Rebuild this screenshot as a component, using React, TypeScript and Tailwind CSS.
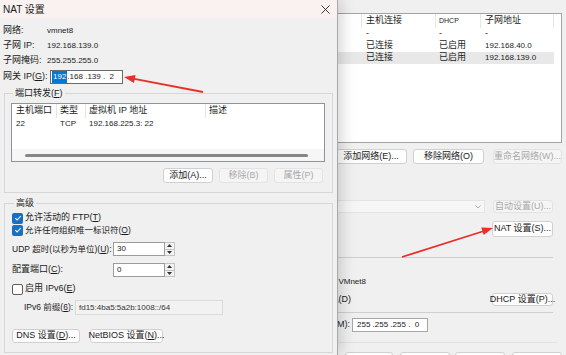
import React from "react";

type BtnProps = {
  children?: React.ReactNode;
  className: string;
  disabled?: boolean;
};

function Btn({ children, className, disabled }: BtnProps) {
  return (
    <div
      className={`flex flex-none items-center justify-center whitespace-nowrap rounded-[3px] border text-[9px] ${
        disabled
          ? "border-[#e3e3e3] bg-[#f5f5f5] text-[#a9a9a9]"
          : "border-[#d0d0d0] bg-[#fdfdfd] text-[#1b1b1b]"
      } ${className}`}
    >
      {children}
    </div>
  );
}

function Check({ checked }: { checked: boolean }) {
  if (!checked) {
    return <div className="h-[11px] w-[11px] flex-none rounded-[2px] border border-[#5d5d5d] bg-white" />;
  }
  return (
    <div className="flex h-[11px] w-[11px] flex-none items-center justify-center rounded-[2px] bg-[#1a6fc4]">
      <svg width="8" height="8" viewBox="0 0 8 8" fill="none">
        <path d="M1.3 4.2 3.1 6 6.8 2" stroke="white" strokeWidth="1.1" />
      </svg>
    </div>
  );
}

function Spin({ value }: { value: string }) {
  return (
    <div className="flex h-[14px] flex-none">
      <div className="flex w-[52px] items-center border border-[#9c9c9c] bg-white pl-[3px] text-[8px]">{value}</div>
      <div className="flex w-[10px] flex-col border border-l-0 border-[#c4c4c4]">
        <div className="flex flex-1 items-center justify-center bg-[#f3f3f3]">
          <svg width="5" height="3" viewBox="0 0 5 3"><path d="M0 3h5L2.5 0z" fill="#333" /></svg>
        </div>
        <div className="flex flex-1 items-center justify-center border-t border-[#c4c4c4] bg-[#f3f3f3]">
          <svg width="5" height="3" viewBox="0 0 5 3"><path d="M0 0h5L2.5 3z" fill="#333" /></svg>
        </div>
      </div>
    </div>
  );
}

function NatDialog() {
  return (
    <div className="relative z-10 flex h-[355px] w-[338px] flex-none flex-col border-r border-[#a9a9a9] bg-[#f0f0f0] shadow-[3px_0_14px_rgba(0,0,0,0.18)]">
      <div className="flex h-[18px] items-center justify-between bg-[#f9f2f1] pl-[3px] pr-[7px]">
        <span className="text-[10px]">NAT 设置</span>
        <svg width="9" height="9" viewBox="0 0 9 9">
          <path d="M0.5 0.5l8 8M8.5 0.5l-8 8" stroke="#222" strokeWidth="0.9" />
        </svg>
      </div>

      <div className="pl-[3px] pt-[5px] text-[9px]">
        <div className="flex h-[15px] items-center">
          <span className="w-[44px]">网络:</span>
          <span className="text-[8px]">vmnet8</span>
        </div>
        <div className="flex h-[15px] items-center">
          <span className="w-[44px]">子网 IP:</span>
          <span className="text-[8px]">192.168.139.0</span>
        </div>
        <div className="flex h-[15px] items-center">
          <span className="w-[44px]">子网掩码:</span>
          <span className="text-[8px]">255.255.255.0</span>
        </div>
        <div className="mt-[2px] flex h-[14px] items-center">
          <span className="w-[47px] whitespace-nowrap">
            网关 IP(<span className="underline">G</span>):
          </span>
          <div className="flex h-[14px] w-[73px] items-center border border-[#6b6b6b] bg-white pl-[1px] text-[8px]">
            <span className="bg-[#0078d7] px-[1px] text-white">192</span>
            <span className="whitespace-pre">.168 .139 .  2</span>
          </div>
        </div>
      </div>

      <div className="flex flex-col px-[4px] text-[9px]">
        <fieldset className="mt-[3px] flex h-[106px] flex-col border border-[#d6d6d6] pl-[6px] pr-[7px]">
          <legend className="ml-[2px] px-[2px] leading-[12px]">
            端口转发(<span className="underline">F</span>)
          </legend>
          <div className="mt-[4px] flex h-[59px] flex-col border border-[#8f949c] bg-white">
            <div className="flex h-[14px]">
              <div className="flex w-[45px] items-center border-r border-[#e6e6e6] pl-[4px]">主机端口</div>
              <div className="flex w-[29px] items-center border-r border-[#e6e6e6] pl-[3px]">类型</div>
              <div className="flex w-[120px] items-center border-r border-[#e6e6e6] pl-[3px]">虚拟机 IP 地址</div>
              <div className="flex flex-1 items-center pl-[3px]">描述</div>
            </div>
            <div className="flex h-[12px] items-center text-[8px]">
              <div className="w-[45px] pl-[4px]">22</div>
              <div className="w-[29px] pl-[3px]">TCP</div>
              <div className="pl-[3px]">192.168.225.3: 22</div>
            </div>
            <div className="flex-1" />
            <div className="flex h-[12px] items-center bg-[#f6f6f6]">
              <div className="ml-[13px] h-[3px] w-[283px] rounded-full bg-[#868686]" />
            </div>
          </div>
          <div className="mt-[6px] flex justify-end gap-[6px] pr-[2px]">
            <Btn className="h-[15px] w-[50px]">添加(A)...</Btn>
            <Btn className="h-[15px] w-[49px]" disabled>移除(B)</Btn>
            <Btn className="h-[15px] w-[49px]" disabled>属性(P)</Btn>
          </div>
        </fieldset>

        <fieldset className="mt-[4px] flex h-[156px] flex-col border border-[#d6d6d6] pl-[7px]">
          <legend className="ml-[2px] px-[2px] leading-[12px]">高级</legend>
          <div className="mt-[3px] flex h-[12px] items-center gap-[2px]">
            <Check checked />
            <span>
              允许活动的 FTP(<span className="underline">T</span>)
            </span>
          </div>
          <div className="flex h-[12px] items-center gap-[2px]">
            <Check checked />
            <span className="text-[8.5px]">
              允许任何组织唯一标识符(<span className="underline">O</span>)
            </span>
          </div>
          <div className="mt-[6px] flex h-[14px] items-center">
            <span className="w-[101px] flex-none whitespace-nowrap text-[8.5px]">
              UDP 超时(以秒为单位)(<span className="underline">U</span>):
            </span>
            <Spin value="30" />
          </div>
          <div className="mt-[7px] flex h-[14px] items-center">
            <span className="w-[101px] flex-none whitespace-nowrap">
              配置端口(<span className="underline">C</span>):
            </span>
            <Spin value="0" />
          </div>
          <div className="mt-[6px] flex h-[12px] items-center gap-[2px]">
            <Check checked={false} />
            <span>
              启用 IPv6(<span className="underline">E</span>)
            </span>
          </div>
          <div className="mt-[5px] flex h-[15px] items-center pl-[12px]">
            <span className="w-[51px] flex-none whitespace-nowrap text-[8.5px]">
              IPv6 前缀(<span className="underline">6</span>):
            </span>
            <div className="flex h-[15px] w-[148px] items-center border border-[#dadada] bg-[#f2f2f2] pl-[3px] text-[8px] text-[#333]">
              fd15:4ba5:5a2b:1008::/64
            </div>
          </div>
          <div className="mt-[14px] flex gap-[10px]">
            <Btn className="h-[14px] w-[68px]">
              DNS 设置(<span className="underline">D</span>)...
            </Btn>
            <Btn className="h-[14px] w-[73px]">
              NetBIOS 设置(<span className="underline">N</span>)...
            </Btn>
          </div>
        </fieldset>
      </div>
    </div>
  );
}

function MainWindow() {
  return (
    <div className="relative flex-1 overflow-hidden bg-[#f0f0f0] text-[9px]">
      <div className="-ml-[40px] flex w-[268px] flex-col pt-[13px]">
        <div className="flex h-[130px] w-[264px] flex-col border border-[#a3a3a3] bg-white">
          <div className="flex h-[14px]">
            <div className="w-[63px] border-r border-[#e6e6e6]" />
            <div className="flex w-[74px] items-center border-r border-[#e6e6e6] pl-[4px]">主机连接</div>
            <div className="flex w-[45px] items-center border-r border-[#e6e6e6] pl-[3px] text-[7px]">DHCP</div>
            <div className="flex w-[73px] items-center border-r border-[#e6e6e6] pl-[4px]">子网地址</div>
          </div>
          <div className="flex h-[12px] items-center">
            <div className="w-[63px]" />
            <div className="w-[74px] pl-[4px]">-</div>
            <div className="w-[45px] pl-[3px]">-</div>
            <div className="w-[73px] pl-[4px]">-</div>
          </div>
          <div className="flex h-[12px] items-center">
            <div className="w-[63px]" />
            <div className="w-[74px] pl-[4px]">已连接</div>
            <div className="w-[45px] pl-[3px]">已启用</div>
            <div className="w-[73px] pl-[4px] text-[8px]">192.168.40.0</div>
          </div>
          <div className="flex h-[12px] w-[255px] items-center bg-[#e8e8e8]">
            <div className="w-[63px]" />
            <div className="w-[74px] pl-[4px]">已连接</div>
            <div className="w-[45px] pl-[3px]">已启用</div>
            <div className="w-[73px] pl-[4px] text-[8px]">192.168.139.0</div>
          </div>
        </div>

        <div className="mt-[6px] flex h-[15px]">
          <Btn className="ml-[37px] h-[15px] w-[72px]">添加网络(E)...</Btn>
          <Btn className="ml-[6px] h-[15px] w-[71px]">移除网络(O)</Btn>
          <Btn className="ml-[9px] h-[15px] w-[69px]" disabled>重命名网络(W)...</Btn>
        </div>

        <div className="mt-[36px] flex h-[13px]">
          <div className="flex w-[187px] items-center justify-end border border-[#e4e4e4] bg-[#f6f6f6] pr-[3px]">
            <svg width="6" height="4" viewBox="0 0 6 4" fill="none">
              <path d="M0.5 0.5 3 3l2.5-2.5" stroke="#9a9a9a" strokeWidth="0.8" />
            </svg>
          </div>
          <Btn className="ml-[8px] h-[13px] w-[60px]" disabled>自动设置(U)...</Btn>
        </div>

        <div className="mt-[8px] flex h-[16px]">
          <Btn className="ml-[194px] h-[16px] w-[61px]">NAT 设置(S)...</Btn>
        </div>

        <div className="mt-[20px] h-px w-[255px] bg-[#cfcfcf]" />

        <div className="mt-[18px] flex h-[12px] w-[68px] items-center justify-end whitespace-nowrap text-[8px]">
          主机虚拟适配器名称: VMware 网络适配器 VMnet8
        </div>

        <div className="mt-[5px] flex h-[13px] items-center">
          <div className="flex w-[53px] justify-end whitespace-nowrap">
            使用本地 DHCP 服务将 IP 地址分配给虚拟机(D)
          </div>
          <Btn className="ml-[141px] h-[13px] w-[61px]">DHCP 设置(P)...</Btn>
        </div>

        <div className="mt-[6px] h-px w-[255px] bg-[#cfcfcf]" />

        <div className="mt-[5px] flex h-[14px] items-center">
          <div className="flex w-[52px] justify-end whitespace-nowrap">子网掩码(M):</div>
          <div className="ml-[2px] flex h-[14px] w-[76px] items-center whitespace-pre border border-[#a7a7a7] bg-white pl-[4px] text-[8px]">
            255 .255 .255 .  0
          </div>
        </div>

        <div className="mt-[10px] h-px w-[259px] bg-[#e2e2e2]" />

        <div className="mt-[9px] flex h-[15px]">
          <Btn className="ml-[47px] h-[15px] w-[48px]" />
          <Btn className="ml-[7px] h-[15px] w-[50px]" />
          <Btn className="ml-[5px] h-[15px] w-[50px]" />
          <Btn className="ml-[7px] h-[15px] w-[50px]" />
        </div>
      </div>
    </div>
  );
}

export default function App() {
  return (
    <div className="relative flex h-[355px] w-[566px] overflow-hidden font-['Liberation_Sans','Noto_Sans_CJK_SC',sans-serif] text-[#1b1b1b]">
      <NatDialog />
      <MainWindow />
      <svg className="pointer-events-none absolute left-0 top-0 z-20" width="566" height="355" viewBox="0 0 566 355">
        <line x1="203" y1="92" x2="133" y2="78.7" stroke="#e8302a" strokeWidth="1.8" />
        <polygon points="124,77 135.5,75.1 134,83" fill="#e8302a" />
        <line x1="402" y1="257" x2="484" y2="231" stroke="#e8302a" strokeWidth="1.8" />
        <polygon points="493,228 483.7,235.1 481.3,227.5" fill="#e8302a" />
      </svg>
    </div>
  );
}
